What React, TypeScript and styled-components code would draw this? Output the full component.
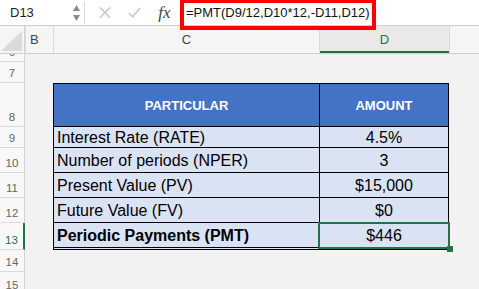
import React from 'react';
import styled, { createGlobalStyle } from 'styled-components';

const GlobalStyle = createGlobalStyle`
  html, body { margin: 0; padding: 0; background: #f2f2f2; }
  body { font-family: "Liberation Sans", Arial, sans-serif; }
`;

const COLS = '25px 28px 266px 130px 1fr';

const Page = styled.div`
  width: 479px;
  height: 289px;
  overflow: hidden;
  background: #f2f2f2;
`;

const FormulaBar = styled.div`
  display: flex;
  align-items: center;
  height: 26px;
  box-sizing: border-box;
  background: #fff;
  border-bottom: 1px solid #cfcfcf;
`;

const NameBox = styled.div`
  box-sizing: border-box;
  width: 70px;
  padding-left: 10px;
  font-size: 13px;
  color: #222;
`;

const Spinner = styled.div`
  width: 12px;
  display: flex;
  flex-direction: column;
  align-items: center;
  gap: 4px;
`;

const Divider = styled.div`
  width: 1px;
  height: 22px;
  margin-left: 2px;
  background: #d6d6d6;
`;

const IconSlot = styled.div<{ $w: number }>`
  width: ${p => p.$w}px;
  display: flex;
  justify-content: center;
  align-items: center;
`;

const Fx = styled.div`
  box-sizing: border-box;
  width: 37px;
  padding-left: 6px;
  text-align: center;
  font-family: "Liberation Serif", "Times New Roman", serif;
  font-style: italic;
  font-size: 17px;
  color: #444;
`;

const FormulaInput = styled.div`
  position: relative;
  z-index: 2;
  align-self: flex-start;
  margin-top: -1px;
  box-sizing: border-box;
  width: 196px;
  height: 31px;
  border: 4px solid #ff0000;
  padding: 2px 0 0 2px;
  font-size: 13px;
  line-height: 15px;
  color: #111;
  white-space: nowrap;
`;

const HeaderRow = styled.div`
  display: grid;
  grid-template-columns: ${COLS};
  height: 28px;
  box-sizing: border-box;
  border-bottom: 1px solid #cfcfcf;
  background: #f5f5f5;
`;

const Corner = styled.div`
  border-right: 1px solid #d4d4d4;
  display: flex;
  align-items: flex-end;
  justify-content: flex-end;
  padding: 0 2px 2px 0;
`;

const ColHeader = styled.div<{ $selected?: boolean; $left?: boolean }>`
  display: flex;
  align-items: center;
  justify-content: ${p => (p.$left ? 'flex-start' : 'center')};
  padding-left: ${p => (p.$left ? '4px' : '0')};
  box-sizing: border-box;
  border-left: 1px solid #dadada;
  font-size: 13px;
  color: ${p => (p.$selected ? '#217346' : '#444')};
  background: ${p => (p.$selected ? '#e9e9e9' : 'transparent')};
  box-shadow: ${p => (p.$selected ? 'inset 0 -2px 0 #217346' : 'none')};
`;

const SheetRow = styled.div<{ $h: number }>`
  display: grid;
  grid-template-columns: ${COLS};
  height: ${p => p.$h}px;
`;

const RowHeader = styled.div<{ $selected?: boolean }>`
  box-sizing: border-box;
  overflow: hidden;
  display: flex;
  align-items: flex-end;
  justify-content: center;
  padding-bottom: 3px;
  background: #f8f8f8;
  border-bottom: 1px solid #dcdcdc;
  border-right: ${p => (p.$selected ? '2px solid #217346' : '1px solid #d4d4d4')};
  font-size: 11.5px;
  line-height: 1;
  color: ${p => (p.$selected ? '#217346' : '#666')};
`;

const Blank = styled.div``;

type Kind = 'head' | 'body';

const Cell = styled.div<{ $kind: Kind; $value?: boolean; $bold?: boolean; $top?: boolean; $double?: boolean }>`
  position: relative;
  box-sizing: border-box;
  display: flex;
  align-items: center;
  white-space: nowrap;
  justify-content: ${p => (p.$value || p.$kind === 'head' ? 'center' : 'flex-start')};
  padding-top: ${p => (p.$kind === 'head' ? '0' : '2px')};
  padding-left: ${p => (p.$value || p.$kind === 'head' ? '0' : '3px')};
  background: ${p => (p.$kind === 'head' ? '#4472c4' : '#dae3f3')};
  color: ${p => (p.$kind === 'head' ? '#fff' : '#000')};
  font-size: ${p => (p.$kind === 'head' ? '13px' : '16px')};
  font-weight: ${p => (p.$kind === 'head' || p.$bold ? 700 : 400)};
  border-left: 1px solid #000;
  border-right: ${p => (p.$value ? '1px solid #000' : 'none')};
  border-top: ${p => (p.$top ? '1px solid #000' : 'none')};
  border-bottom: ${p => (p.$double ? '3px double #000' : '1px solid #000')};
`;

const SelectionFrame = styled.div`
  position: absolute;
  top: -1px;
  left: -2px;
  right: -2px;
  bottom: -2px;
  border: 2px solid #217346;
  z-index: 1;
  pointer-events: none;
`;

const FillHandle = styled.div`
  position: absolute;
  right: -5px;
  bottom: -5px;
  width: 6px;
  height: 6px;
  background: #217346;
  z-index: 2;
`;

const rows = [
  { n: 9, label: 'Interest Rate (RATE)', value: '4.5%', h: 21 },
  { n: 10, label: 'Number of periods (NPER)', value: '3', h: 25 },
  { n: 11, label: 'Present Value (PV)', value: '$15,000', h: 25 },
  { n: 12, label: 'Future Value (FV)', value: '$0', h: 25 },
];

export default function App() {
  return (
    <Page>
      <GlobalStyle />
      <FormulaBar>
        <NameBox>D13</NameBox>
        <Spinner>
          <svg width="7" height="6" viewBox="0 0 7 6"><path d="M3.5 0 L7 6 L0 6 Z" fill="#8a8a8a" /></svg>
          <svg width="7" height="6" viewBox="0 0 7 6"><path d="M0 0 L7 0 L3.5 6 Z" fill="#8a8a8a" /></svg>
        </Spinner>
        <Divider />
        <IconSlot $w={40}>
          <svg width="12" height="11" viewBox="0 0 12 11">
            <path d="M1 0.5 L11 10.5 M11 0.5 L1 10.5" stroke="#c9c9c9" strokeWidth="1.6" fill="none" />
          </svg>
        </IconSlot>
        <IconSlot $w={18}>
          <svg width="13" height="11" viewBox="0 0 13 11">
            <path d="M0.8 5.8 L4.6 9.8 L12.3 0.8" stroke="#c9c9c9" strokeWidth="1.6" fill="none" />
          </svg>
        </IconSlot>
        <Fx>fx</Fx>
        <FormulaInput>=PMT(D9/12,D10*12,-D11,D12)</FormulaInput>
      </FormulaBar>

      <HeaderRow>
        <Corner>
          <svg width="21" height="20" viewBox="0 0 21 20"><path d="M21 0 L21 20 L0 20 Z" fill="#dadada" /></svg>
        </Corner>
        <ColHeader $left>B</ColHeader>
        <ColHeader>C</ColHeader>
        <ColHeader $selected>D</ColHeader>
        <ColHeader />
      </HeaderRow>

      <SheetRow $h={8}>
        <RowHeader>6</RowHeader>
      </SheetRow>
      <SheetRow $h={21}>
        <RowHeader>7</RowHeader>
      </SheetRow>
      <SheetRow $h={44}>
        <RowHeader>8</RowHeader>
        <Blank />
        <Cell $kind="head" $top>PARTICULAR</Cell>
        <Cell $kind="head" $top $value>AMOUNT</Cell>
      </SheetRow>
      {rows.map(r => (
        <SheetRow key={r.n} $h={r.h}>
          <RowHeader>{r.n}</RowHeader>
          <Blank />
          <Cell $kind="body">{r.label}</Cell>
          <Cell $kind="body" $value>{r.value}</Cell>
        </SheetRow>
      ))}
      <SheetRow $h={27}>
        <RowHeader $selected>13</RowHeader>
        <Blank />
        <Cell $kind="body" $bold $double>Periodic Payments (PMT)</Cell>
        <Cell $kind="body" $value $double>
          $446
          <SelectionFrame />
          <FillHandle />
        </Cell>
      </SheetRow>
      <SheetRow $h={22}>
        <RowHeader>14</RowHeader>
      </SheetRow>
      <SheetRow $h={23}>
        <RowHeader>15</RowHeader>
      </SheetRow>
    </Page>
  );
}
